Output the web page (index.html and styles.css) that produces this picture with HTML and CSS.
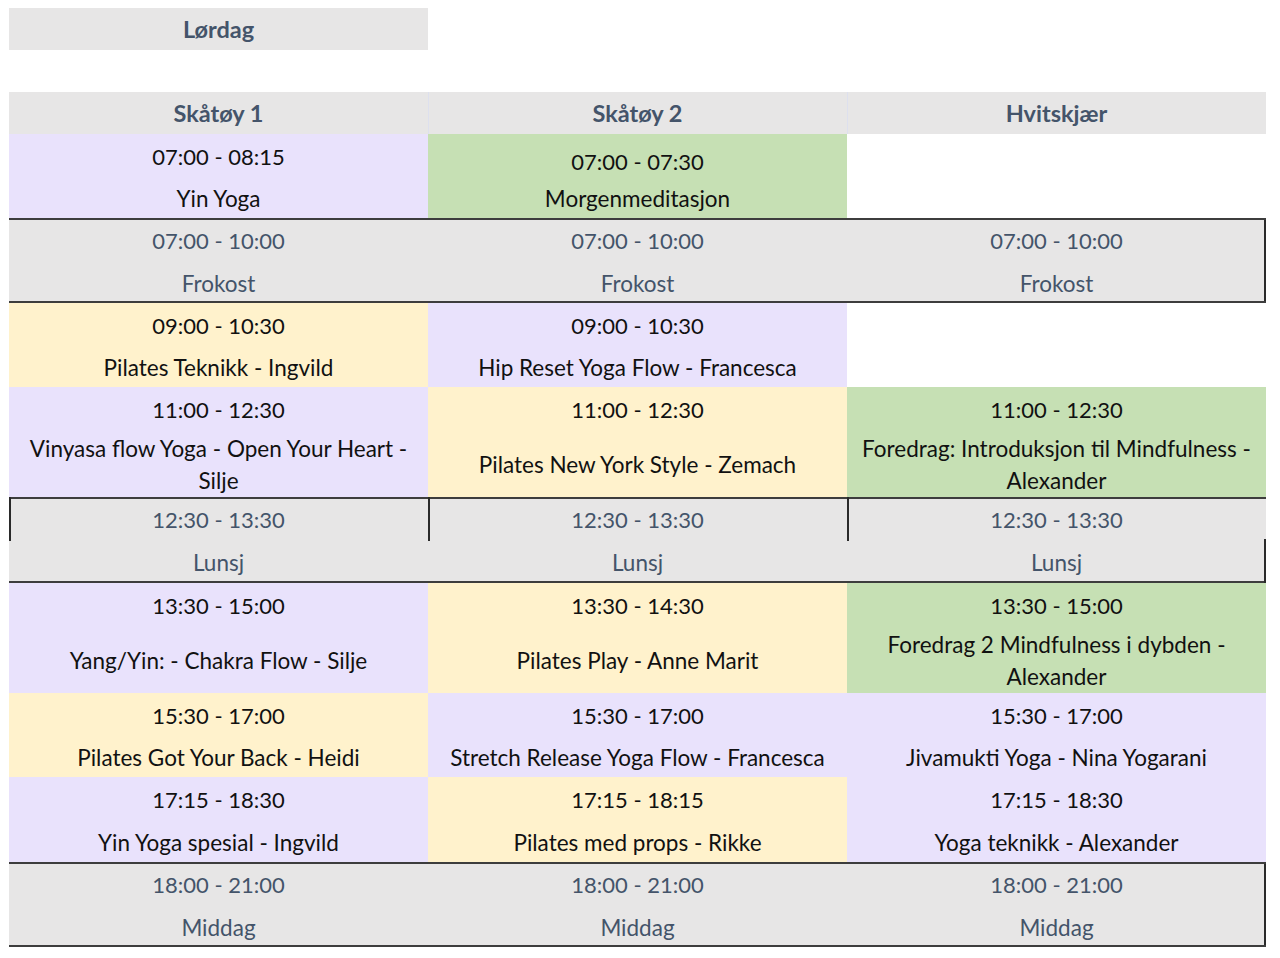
FILE: index.html
```html
<!DOCTYPE html>
<html lang="no">
<head>
    <meta charset="UTF-8">
    <title>Program lørdag</title>
    <link rel="stylesheet" href="styles.css">
</head>
<body>
    <div class="day">Lørdag</div>

    <div class="schedule">
        <div class="row head">
            <div class="cell">Skåtøy 1</div>
            <div class="cell">Skåtøy 2</div>
            <div class="cell">Hvitskjær</div>
        </div>

        <div class="row h84">
            <div class="cell purple"><div class="time">07:00 - 08:15</div><div class="name">Yin Yoga</div></div>
            <div class="cell green tight"><div class="time">07:00 - 07:30</div><div class="name">Morgenmeditasjon</div></div>
            <div class="cell"></div>
        </div>

        <div class="row meal boxed h85">
            <div class="cell"><div class="time">07:00 - 10:00</div><div class="name">Frokost</div></div>
            <div class="cell"><div class="time">07:00 - 10:00</div><div class="name">Frokost</div></div>
            <div class="cell"><div class="time">07:00 - 10:00</div><div class="name">Frokost</div></div>
        </div>

        <div class="row h84">
            <div class="cell yellow"><div class="time">09:00 - 10:30</div><div class="name">Pilates Teknikk - Ingvild</div></div>
            <div class="cell purple"><div class="time">09:00 - 10:30</div><div class="name">Hip Reset Yoga Flow - Francesca</div></div>
            <div class="cell"></div>
        </div>

        <div class="row h110">
            <div class="cell purple"><div class="time">11:00 - 12:30</div><div class="name">Vinyasa flow Yoga - Open Your Heart -<br>Silje</div></div>
            <div class="cell yellow"><div class="time">11:00 - 12:30</div><div class="name">Pilates New York Style - Zemach</div></div>
            <div class="cell green"><div class="time">11:00 - 12:30</div><div class="name">Foredrag: Introduksjon til Mindfulness -<br>Alexander</div></div>
        </div>

        <div class="row meal lunch h86">
            <div class="cell"><div class="time">12:30 - 13:30</div><div class="name">Lunsj</div></div>
            <div class="cell"><div class="time">12:30 - 13:30</div><div class="name">Lunsj</div></div>
            <div class="cell"><div class="time">12:30 - 13:30</div><div class="name">Lunsj</div></div>
        </div>

        <div class="row h110">
            <div class="cell purple"><div class="time">13:30 - 15:00</div><div class="name">Yang/Yin: - Chakra Flow - Silje</div></div>
            <div class="cell yellow"><div class="time">13:30 - 14:30</div><div class="name">Pilates Play - Anne Marit</div></div>
            <div class="cell green"><div class="time">13:30 - 15:00</div><div class="name">Foredrag 2 Mindfulness i dybden -<br>Alexander</div></div>
        </div>

        <div class="row h84">
            <div class="cell yellow"><div class="time">15:30 - 17:00</div><div class="name">Pilates Got Your Back - Heidi</div></div>
            <div class="cell purple"><div class="time">15:30 - 17:00</div><div class="name">Stretch Release Yoga Flow - Francesca</div></div>
            <div class="cell purple"><div class="time">15:30 - 17:00</div><div class="name">Jivamukti Yoga - Nina Yogarani</div></div>
        </div>

        <div class="row h85">
            <div class="cell purple"><div class="time">17:15 - 18:30</div><div class="name">Yin Yoga spesial - Ingvild</div></div>
            <div class="cell yellow"><div class="time">17:15 - 18:15</div><div class="name">Pilates med props - Rikke</div></div>
            <div class="cell purple"><div class="time">17:15 - 18:30</div><div class="name">Yoga teknikk - Alexander</div></div>
        </div>

        <div class="row meal boxed h85">
            <div class="cell"><div class="time">18:00 - 21:00</div><div class="name">Middag</div></div>
            <div class="cell"><div class="time">18:00 - 21:00</div><div class="name">Middag</div></div>
            <div class="cell"><div class="time">18:00 - 21:00</div><div class="name">Middag</div></div>
        </div>
    </div>
</body>
</html>
```

FILE: styles.css
```css
body {
    margin: 0;
    padding: 8px 0 0 9px;
    background: #fff;
    font-family: Lato, "Open Sans", sans-serif;
    font-size: 22px;
    color: #111;
}
.day {
    width: 419px;
    height: 42px;
    line-height: 42px;
    background-color: #e7e6e6;
    color: #44546a;
    font-size: 23.5px;
    font-weight: bold;
    text-align: center;
}
.schedule {
    width: 1257px;
    margin-top: 42px;
}
.row {
    display: grid;
    grid-template-columns: repeat(3, 1fr);
    position: relative;
}
.head {
    height: 42px;
    background-color: #e7e6e6;
}
.head .cell {
    line-height: 42px;
    color: #44546a;
    font-size: 23.5px;
    font-weight: bold;
    text-align: center;
}
.head .cell + .cell {
    box-shadow: inset 1px 0 #dde0ee;
}
.h84 { height: 84px; }
.h85 { height: 85px; }
.h86 { height: 86px; }
.h110 { height: 110px; }

.cell {
    display: flex;
    flex-direction: column;
    position: relative;
    text-align: center;
}
.time {
    line-height: 46px;
}
.name {
    flex: 1;
    display: flex;
    align-items: center;
    justify-content: center;
    font-size: 22.5px;
    line-height: 32px;
    padding: 0 4px;
}
.tight {
    padding-top: 10px;
}
.tight .time {
    line-height: 36px;
}
.purple { background-color: #e9e2fc; }
.green { background-color: #c6e0b4; }
.yellow { background-color: #fff2cc; }

.meal {
    background-color: #e7e6e6;
    color: #44546a;
    box-shadow: inset 0 2px #3d3d3d, inset 0 -2px #3d3d3d;
}
.meal.boxed {
    box-shadow: inset 0 2px #3d3d3d, inset 0 -2px #3d3d3d, inset -2px 0 #2a2a2a;
}
.lunch .cell::before {
    content: "";
    position: absolute;
    left: 0;
    top: 0;
    width: 2px;
    height: 44px;
    background: #2a2a2a;
}
.lunch .cell:last-child::after {
    content: "";
    position: absolute;
    right: 0;
    bottom: 0;
    width: 2px;
    height: 44px;
    background: #2a2a2a;
}
```
